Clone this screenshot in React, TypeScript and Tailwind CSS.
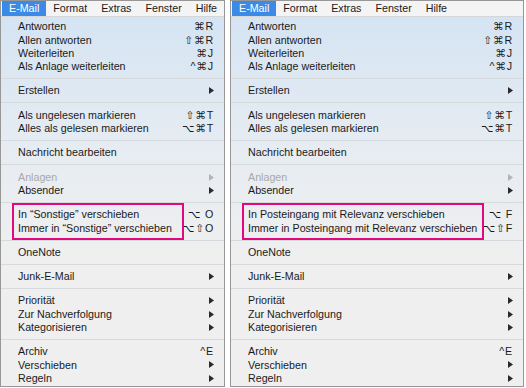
import React from 'react';

type Item =
  | { kind: 'sep' }
  | { kind: 'row'; label: string; shortcut?: string; sub?: boolean; disabled?: boolean }
  | { kind: 'boxed'; rows: { label: string; shortcut: string }[] };

const menuBar = ['Format', 'Extras', 'Fenster', 'Hilfe'];

const Arrow = ({ disabled }: { disabled?: boolean }) => (
  <svg width="5" height="7" viewBox="0 0 5 7" className="block">
    <polygon points="0,0 5,3.5 0,7" fill={disabled ? '#b4b4b4' : '#2a2a2a'} />
  </svg>
);

const Row = ({
  label,
  shortcut,
  sub,
  disabled,
}: {
  label: string;
  shortcut?: string;
  sub?: boolean;
  disabled?: boolean;
}) => (
  <div
    className={`flex h-[13.3px] items-center justify-between whitespace-nowrap pl-[17px] pr-[10px] leading-none ${
      disabled ? 'text-[#a8a8a8]' : 'text-[#1a1a1a]'
    }`}
  >
    <span>{label}</span>
    {sub ? (
      <Arrow disabled={disabled} />
    ) : (
      shortcut && <span className="tracking-[0.8px]">{shortcut}</span>
    )}
  </div>
);

const buildItems = (moveTo: string, key: string): Item[] => [
  { kind: 'row', label: 'Antworten', shortcut: '⌘R' },
  { kind: 'row', label: 'Allen antworten', shortcut: '⇧⌘R' },
  { kind: 'row', label: 'Weiterleiten', shortcut: '⌘J' },
  { kind: 'row', label: 'Als Anlage weiterleiten', shortcut: '^⌘J' },
  { kind: 'sep' },
  { kind: 'row', label: 'Erstellen', sub: true },
  { kind: 'sep' },
  { kind: 'row', label: 'Als ungelesen markieren', shortcut: '⇧⌘T' },
  { kind: 'row', label: 'Alles als gelesen markieren', shortcut: '⌥⌘T' },
  { kind: 'sep' },
  { kind: 'row', label: 'Nachricht bearbeiten' },
  { kind: 'sep' },
  { kind: 'row', label: 'Anlagen', sub: true, disabled: true },
  { kind: 'row', label: 'Absender', sub: true },
  { kind: 'sep' },
  {
    kind: 'boxed',
    rows: [
      { label: `In ${moveTo} verschieben`, shortcut: `⌥ ${key}` },
      { label: `Immer in ${moveTo} verschieben`, shortcut: `⌥⇧${key}` },
    ],
  },
  { kind: 'sep' },
  { kind: 'row', label: 'OneNote' },
  { kind: 'sep' },
  { kind: 'row', label: 'Junk-E-Mail', sub: true },
  { kind: 'sep' },
  { kind: 'row', label: 'Priorität', sub: true },
  { kind: 'row', label: 'Zur Nachverfolgung', sub: true },
  { kind: 'row', label: 'Kategorisieren', sub: true },
  { kind: 'sep' },
  { kind: 'row', label: 'Archiv', shortcut: '^E' },
  { kind: 'row', label: 'Verschieben', sub: true },
  { kind: 'row', label: 'Regeln', sub: true },
];

const Menu = ({
  width,
  boxWidth,
  moveTo,
  shortcutKey,
}: {
  width: string;
  boxWidth: string;
  moveTo: string;
  shortcutKey: string;
}) => {
  const items = buildItems(moveTo, shortcutKey);

  return (
    <div className={`${width} flex h-[387px] shrink-0 flex-col border border-[#979797]`}>
      <div className="flex h-[16px] shrink-0 items-stretch overflow-hidden whitespace-nowrap border-b border-[#d4d6d8] bg-[#f4f4f4] pl-px leading-none text-[#1a1a1a]">
        <div className="flex shrink-0 items-center bg-[#3b8be6] px-[7px] text-white">E-Mail</div>
        {menuBar.map((name) => (
          <div key={name} className="flex shrink-0 items-center px-[7px]">
            {name}
          </div>
        ))}
      </div>
      <div className="flex-1 bg-linear-to-b from-[#d5e4f3] via-[#e6ecf2] via-35% to-[#efefef] to-65% pt-[3px]">
        {items.map((item, i) => {
          if (item.kind === 'sep') {
            return (
              <div key={i} className="flex h-[11px] items-center">
                <div className="h-px w-full bg-[#d6dadd]" />
              </div>
            );
          }
          if (item.kind === 'boxed') {
            return (
              <div key={i} className="relative">
                {item.rows.map((r) => (
                  <Row key={r.label} label={r.label} shortcut={r.shortcut} />
                ))}
                <div
                  className={`absolute left-[11px] top-[-5px] bottom-[-5px] ${boxWidth} border-2 border-[#e4087f]`}
                />
              </div>
            );
          }
          return (
            <Row
              key={i}
              label={item.label}
              shortcut={item.shortcut}
              sub={item.sub}
              disabled={item.disabled}
            />
          );
        })}
      </div>
    </div>
  );
};

export default function App() {
  return (
    <div className="flex h-[388px] w-[526px] gap-[5px] overflow-hidden bg-white text-[10.7px] font-['Liberation_Sans','DejaVu_Sans',sans-serif]">
      <Menu width="w-[225px]" boxWidth="w-[172px]" moveTo="“Sonstige”" shortcutKey="O" />
      <Menu
        width="w-[294px]"
        boxWidth="w-[242px]"
        moveTo="Posteingang mit Relevanz"
        shortcutKey="F"
      />
    </div>
  );
}
